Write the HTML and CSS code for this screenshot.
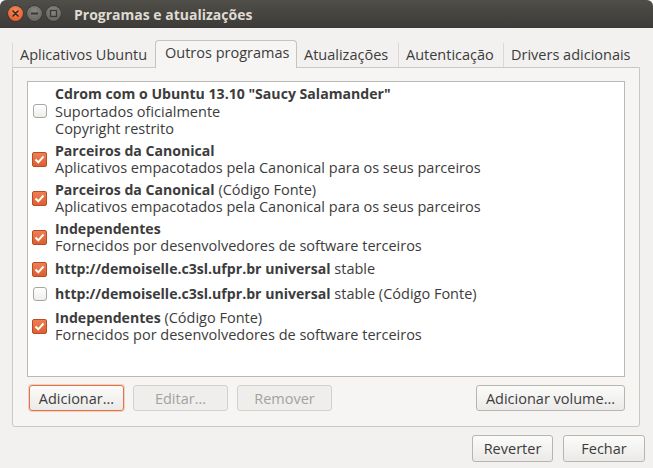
FILE: index.html
```html
<!DOCTYPE html>
<html lang="pt">
<head>
<meta charset="utf-8">
<title>Programas e atualizações</title>
<link rel="stylesheet" href="styles.css">
</head>
<body>
<div class="window">
  <div class="titlebar">
    <div class="wbtns">
      <span class="wbtn close"><svg width="15" height="15" viewBox="0 0 15 15"><path d="M5 5 L10 10 M10 5 L5 10" stroke="#3a2a22" stroke-width="1.6" stroke-linecap="round"/></svg></span>
      <span class="wbtn"><svg width="15" height="15" viewBox="0 0 15 15"><path d="M4 7.5 H11" stroke="#3a3935" stroke-width="1.8"/></svg></span>
      <span class="wbtn"><svg width="15" height="15" viewBox="0 0 15 15"><rect x="4.5" y="4.5" width="6" height="6" fill="none" stroke="#3a3935" stroke-width="1.3"/></svg></span>
    </div>
    <span class="title">Programas e atualizações</span>
  </div>
  <div class="content">
    <div class="tabs">
      <div class="tab">Aplicativos Ubuntu</div>
      <div class="tab active">Outros programas</div>
      <div class="tab">Atualizações</div>
      <div class="tab">Autenticação</div>
      <div class="tab">Drivers adicionais</div>
    </div>
    <div class="frame">
      <div class="list">
        <div class="row">
          <span class="cb"></span>
          <div class="txt"><b>Cdrom com o Ubuntu 13.10 "Saucy Salamander"</b><br>Suportados oficialmente<br>Copyright restrito</div>
        </div>
        <div class="row">
          <span class="cb on"><svg width="15" height="15" viewBox="0 0 15 15"><path d="M3.5 7.5 L6.3 10.3 L11.5 4.5" fill="none" stroke="#fff" stroke-width="2"/></svg></span>
          <div class="txt"><b>Parceiros da Canonical</b><br>Aplicativos empacotados pela Canonical para os seus parceiros</div>
        </div>
        <div class="row">
          <span class="cb on"><svg width="15" height="15" viewBox="0 0 15 15"><path d="M3.5 7.5 L6.3 10.3 L11.5 4.5" fill="none" stroke="#fff" stroke-width="2"/></svg></span>
          <div class="txt"><b>Parceiros da Canonical</b> (Código Fonte)<br>Aplicativos empacotados pela Canonical para os seus parceiros</div>
        </div>
        <div class="row">
          <span class="cb on"><svg width="15" height="15" viewBox="0 0 15 15"><path d="M3.5 7.5 L6.3 10.3 L11.5 4.5" fill="none" stroke="#fff" stroke-width="2"/></svg></span>
          <div class="txt"><b>Independentes</b><br>Fornecidos por desenvolvedores de software terceiros</div>
        </div>
        <div class="row single">
          <span class="cb on"><svg width="15" height="15" viewBox="0 0 15 15"><path d="M3.5 7.5 L6.3 10.3 L11.5 4.5" fill="none" stroke="#fff" stroke-width="2"/></svg></span>
          <div class="txt"><b>http://demoiselle.c3sl.ufpr.br universal</b> stable</div>
        </div>
        <div class="row single">
          <span class="cb"></span>
          <div class="txt"><b>http://demoiselle.c3sl.ufpr.br universal</b> stable (Código Fonte)</div>
        </div>
        <div class="row">
          <span class="cb on"><svg width="15" height="15" viewBox="0 0 15 15"><path d="M3.5 7.5 L6.3 10.3 L11.5 4.5" fill="none" stroke="#fff" stroke-width="2"/></svg></span>
          <div class="txt"><b>Independentes</b> (Código Fonte)<br>Fornecidos por desenvolvedores de software terceiros</div>
        </div>
      </div>
      <div class="btnrow">
        <button class="btn focus w95">Adicionar...</button>
        <button class="btn dis w95">Editar...</button>
        <button class="btn dis w95">Remover</button>
        <span class="spacer"></span>
        <button class="btn vol">Adicionar volume...</button>
      </div>
    </div>
    <div class="actions">
      <button class="btn big rev">Reverter</button>
      <button class="btn big fec">Fechar</button>
    </div>
  </div>
</div>
</body>
</html>
```
FILE: styles.css
```css
html, body {
  margin: 0;
  padding: 0;
  background: #ffffff;
}

.window {
  width: 653px;
  height: 468px;
  background: #f2f1f0;
  border-radius: 6px 6px 0 0;
  overflow: hidden;
  font-family: "Open Sans", "DejaVu Sans", sans-serif;
  font-size: 14.5px;
  color: #3c3c3c;
}

.titlebar {
  height: 28px;
  background: linear-gradient(#504e49, #3c3b37);
  display: flex;
  align-items: center;
  padding-left: 8px;
  box-sizing: border-box;
}

.wbtns {
  display: flex;
  gap: 4px;
  margin-top: -1px;
}

.wbtn {
  width: 15px;
  height: 15px;
  border-radius: 50%;
  background: radial-gradient(circle at 50% 35%, #8a8882, #5d5b56);
  box-shadow: 0 0 0 0.5px #2e2d2a;
  display: block;
}

.wbtn svg {
  display: block;
}

.wbtn.close {
  background: radial-gradient(circle at 50% 35%, #f58c5e, #e0501f);
}

.title {
  margin-left: 13px;
  font-weight: bold;
  font-size: 14px;
  color: #dfdbd2;
}

.content {
  padding-top: 12px;
}

.tabs {
  display: flex;
  align-items: flex-end;
  height: 28px;
  margin-left: 12px;
  position: relative;
  z-index: 1;
}

.tab {
  height: 24px;
  line-height: 24px;
  padding: 0 0 0 7px;
  border-left: 1px solid #dad8d4;
  color: #3c3c3c;
  box-sizing: border-box;
  margin-bottom: 1px;
  white-space: nowrap;
}

.tab:nth-child(1) { width: 143px; }
.tab:nth-child(3) { width: 101px; border-left: none; }
.tab:nth-child(4) { width: 105px; }
.tab:nth-child(5) { width: 134px; }

.tab.active {
  height: 28px;
  width: 142px;
  line-height: 24px;
  padding-left: 9px;
  background: #f6f5f4;
  border: 1px solid #c6c3bd;
  border-bottom: none;
  border-radius: 4px 4px 0 0;
  margin-bottom: 0;
}

.frame {
  margin: -1px 13px 0 12px;
  height: 360px;
  box-sizing: border-box;
  border: 1px solid #cbc8c2;
  border-radius: 0 0 3px 3px;
  background: #f6f5f4;
  padding: 13px 14px 0 14px;
}

.list {
  height: 296px;
  box-sizing: border-box;
  border: 1px solid #bab8b2;
  background: #ffffff;
  padding-top: 1px;
}

.row {
  display: flex;
  align-items: center;
  padding: 2px 0 2px 4px;
}

.row.single {
  min-height: 25px;
  box-sizing: border-box;
}

.txt {
  line-height: 17.5px;
  margin-left: 8px;
  white-space: nowrap;
}

.txt b {
  font-weight: bold;
  font-size: 14.1px;
}

.cb {
  width: 14px;
  height: 14px;
  box-sizing: border-box;
  border: 1px solid #a9a7a2;
  border-radius: 3px;
  background: linear-gradient(#ffffff, #eeedeb);
  margin-left: 1px;
  flex: none;
}

.cb.on {
  width: 15px;
  height: 15px;
  margin-left: 0;
  border: 1px solid #b54d25;
  border-radius: 2px;
  background: linear-gradient(#ee7f52, #dc5f31);
  position: relative;
}

.cb.on svg {
  position: absolute;
  left: -1px;
  top: -1px;
}

.btnrow {
  display: flex;
  gap: 9px;
  margin-top: 8px;
  padding-left: 2px;
}

.spacer {
  flex: 1;
}

.btn {
  height: 26px;
  box-sizing: border-box;
  border: 1px solid #b8b5ae;
  border-radius: 3px;
  background: linear-gradient(#fbfbfa, #ebeae8);
  font-family: "Open Sans", "DejaVu Sans", sans-serif;
  font-size: 14.5px;
  color: #3c3c3c;
  padding: 0;
  margin: 0;
}

.w95 {
  width: 95px;
}

.btn.focus {
  border: 1px solid #e0734a;
  box-shadow: 0 0 0 1px rgba(240, 140, 100, 0.35);
}

.btn.dis {
  border-color: #d3d1cc;
  background: #efeeec;
  color: #a3a29f;
}

.btn.vol {
  width: 149px;
}

.actions {
  display: flex;
  justify-content: flex-end;
  gap: 10px;
  margin-top: 8px;
  margin-right: 8px;
}

.btn.big {
  height: 27px;
}

.btn.rev {
  width: 81px;
}

.btn.fec {
  width: 82px;
}
```
